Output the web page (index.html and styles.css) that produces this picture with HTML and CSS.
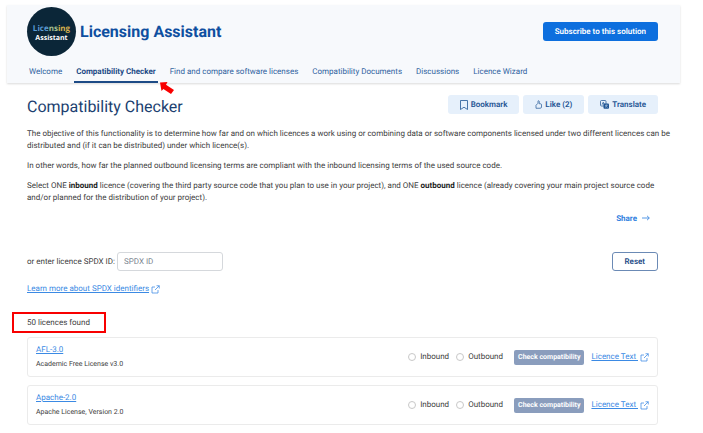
FILE: index.html
```html
<!DOCTYPE html>
<html lang="en">
<head>
    <meta charset="UTF-8">
    <meta name="viewport" content="width=device-width, initial-scale=1.0">
    <title>Compatibility Checker</title>
    <link rel="stylesheet" href="styles.css">
</head>
<body>
    <!-- Shared icon -->
    <svg class="sprite" aria-hidden="true">
        <symbol id="external" viewBox="0 0 18 18">
            <path d="M8 4H2v12h12v-6M11 1.500h5.500V7M16.500 1.500 8 10" fill="none" stroke="currentColor" stroke-width="1.500"/>
        </symbol>
    </svg>

    <header class="header">
        <div class="brand-row">
            <div class="logo">
                <span><span class="logo-blue">Lice</span><span class="logo-green">ns</span><span class="logo-gold">ing</span></span>
                <span class="logo-small">Assistant</span>
            </div>
            <div class="brand">Licensing Assistant</div>
            <button class="btn btn-primary">Subscribe to this solution</button>
        </div>
        <nav class="nav">
            <a href="#">Welcome</a>
            <a href="#" class="active">Compatibility Checker
                <svg class="pointer" viewBox="0 0 14 12" aria-hidden="true"><path d="M0 .5 7.500 0 6 2.700l8 5.300-3 4L3.400 6.900 1.500 9z" fill="#f80000"/></svg>
            </a>
            <a href="#">Find and compare software licenses</a>
            <a href="#">Compatibility Documents</a>
            <a href="#">Discussions</a>
            <a href="#">Licence Wizard</a>
        </nav>
    </header>

    <main class="content">
        <div class="title-row">
            <h1>Compatibility Checker</h1>
            <div class="actions">
                <button class="btn btn-light">
                    <svg class="icon-bookmark" viewBox="0 0 8 10" aria-hidden="true"><path d="M.5.5h7v9L4 7.200.5 9.500z" fill="none" stroke="currentColor" stroke-width=".8"/></svg>
                    Bookmark
                </button>
                <button class="btn btn-light">
                    <svg class="icon-like" viewBox="0 0 14 18" aria-hidden="true"><path d="M2 16.500V10.500L6 6.500V2.500c0-1.500 2.500-1.500 2.500.5v4.500h2.500c1 0 2 .8 2 2v4.500c0 1.500-1 2.500-2.500 2.500z" fill="none" stroke="currentColor" stroke-width="1.400"/></svg>
                    Like (2)
                </button>
                <button class="btn btn-light">
                    <svg class="icon-translate" viewBox="0 0 18 18" aria-hidden="true">
                        <rect x="1" y="1" width="11" height="11" rx="2" fill="none" stroke="currentColor" stroke-width="1.500"/>
                        <path d="M4 9.500 6.500 4 9 9.500M5 7.500h3" fill="none" stroke="currentColor" stroke-width="1.200"/>
                        <rect x="7" y="7" width="11" height="10.500" rx="2" fill="currentColor"/>
                        <path d="M10 10.500h6M13 9v1.500c0 2-1 3.500-3 4.500M11 11c.8 2 2.500 3.500 4.500 4" fill="none" stroke="#e6f0fb" stroke-width=".8"/>
                    </svg>
                    Translate
                </button>
            </div>
        </div>

        <div class="intro">
            <p>The objective of this functionality is to determine how far and on which licences a work using or combining data or software components licensed under two different licences can be distributed and (if it can be distributed) under which licence(s).</p>
            <p>In other words, how far the planned outbound licensing terms are compliant with the inbound licensing terms of the used source code.</p>
            <p>Select ONE <strong>inbound</strong> licence (covering the third party source code that you plan to use in your project), and ONE <strong>outbound</strong> licence (already covering your main project source code and/or planned for the distribution of your project).</p>
        </div>

        <div class="share">
            <a href="#">Share
                <svg class="icon-arrow" viewBox="0 0 8 6" aria-hidden="true"><path d="M0 3h7.200M5 .8 7.300 3 5 5.200" fill="none" stroke="currentColor" stroke-width=".8"/></svg>
            </a>
        </div>

        <div class="filter">
            <label for="spdx">or enter licence SPDX ID:</label>
            <input type="text" id="spdx" placeholder="SPDX ID">
            <button class="btn btn-outline">Reset</button>
        </div>

        <a href="#" class="link learn"><span>Learn more about SPDX identifiers</span><svg class="icon-external" aria-hidden="true"><use href="#external"/></svg></a>

        <div class="found">50 licences found</div>

        <div class="licence">
            <div class="licence-name">
                <a href="#">AFL-3.0</a>
                <div class="full-name">Academic Free License v3.0</div>
            </div>
            <label class="option"><input type="radio" name="inbound" value="AFL-3.0">Inbound</label>
            <label class="option"><input type="radio" name="outbound" value="AFL-3.0">Outbound</label>
            <button class="btn-check">Check compatibility</button>
            <a href="#" class="link"><span>Licence Text&nbsp;</span><svg class="icon-external" aria-hidden="true"><use href="#external"/></svg></a>
        </div>

        <div class="licence">
            <div class="licence-name">
                <a href="#">Apache-2.0</a>
                <div class="full-name">Apache License, Version 2.0</div>
            </div>
            <label class="option"><input type="radio" name="inbound" value="Apache-2.0">Inbound</label>
            <label class="option"><input type="radio" name="outbound" value="Apache-2.0">Outbound</label>
            <button class="btn-check">Check compatibility</button>
            <a href="#" class="link"><span>Licence Text&nbsp;</span><svg class="icon-external" aria-hidden="true"><use href="#external"/></svg></a>
        </div>
    </main>
</body>
</html>
```
FILE: styles.css
```css
* {
    box-sizing: border-box;
}
body {
    font-family: Roboto, sans-serif;
    font-size: 8px;
    line-height: 12px;
    text-rendering: geometricPrecision;
    color: #404040;
    background: white;
    margin: 0;
    padding: 5px 23px 0 7px;
}
button, input {
    font-family: inherit;
    font-size: inherit;
    line-height: inherit;
    text-rendering: inherit;
    margin: 0;
}
a {
    color: #3b8ae4;
}
.sprite {
    display: none;
}

/* Header */
.header {
    background: #f7f9fc;
    padding: 2px 22px 0 20px;
    box-shadow: 0 1px 2px rgba(0, 0, 0, 0.15);
}
.brand-row {
    display: flex;
    align-items: center;
    gap: 4px;
}
.logo {
    width: 49px;
    height: 49px;
    padding-top: 4px;
    border-radius: 50%;
    background: #0b2638;
    color: white;
    display: flex;
    flex-direction: column;
    align-items: center;
    justify-content: center;
    font-family: "Open Sans", sans-serif;
    font-size: 8px;
    font-weight: bold;
    line-height: 10px;
}
.logo-small {
    font-size: 7px;
}
.logo-blue {
    color: #5b9bd5;
}
.logo-green {
    color: #a3bf8f;
}
.logo-gold {
    color: #d9b24c;
}
.brand {
    flex: 1;
    font-size: 16px;
    line-height: 20px;
    font-weight: bold;
    color: #0e4fa0;
}
.btn {
    display: flex;
    align-items: center;
    justify-content: center;
    gap: 3px;
    height: 19px;
    padding: 0 12px;
    border: 0;
    border-radius: 3px;
    font-weight: 600;
    cursor: pointer;
}
.btn-primary {
    background: #0d6fde;
    color: white;
}
.nav {
    display: flex;
    gap: 14px;
    padding: 8px 2px 0;
}
.nav a {
    position: relative;
    padding: 2px 0 3px;
    color: #2f629f;
    text-decoration: none;
    border-bottom: 2px solid transparent;
}
.nav .active {
    margin: 0 -2px;
    padding: 2px 2px 3px;
    font-weight: bold;
    color: #1d4b86;
    border-color: #1d4b86;
}
.pointer {
    position: absolute;
    left: 100%;
    top: 100%;
    width: 14px;
    height: 12px;
    margin: 1px 0 0 2px;
}

/* Content */
.content {
    padding: 12px 22px 0 20px;
}
.title-row {
    display: flex;
    justify-content: space-between;
    align-items: flex-start;
}
h1 {
    margin: 2px 0 0;
    font-size: 16px;
    line-height: 20px;
    font-weight: normal;
    color: #1c3f70;
}
.actions {
    display: flex;
    gap: 4px;
}
.btn-light {
    background: #e6f0fb;
    color: #1f5594;
}
.icon-bookmark {
    width: 8px;
    height: 10px;
}
.icon-like {
    width: 7px;
    height: 9px;
}
.icon-translate {
    width: 9px;
    height: 9px;
}
.intro {
    margin: 11px -20px 0 0;
}
.intro p {
    margin: 0 0 8px;
}
.intro strong {
    color: #222;
}
.share {
    text-align: right;
    padding: 1px 8px 0 0;
}
.share a {
    font-weight: bold;
    text-decoration: none;
    color: #2f80e0;
}
.icon-arrow {
    width: 8px;
    height: 6px;
    margin-left: 3px;
}
.filter {
    display: flex;
    align-items: center;
    gap: 2px;
    margin-top: 27px;
}
.filter input {
    width: 106px;
    height: 19px;
    padding: 0 6px;
    border: 1px solid #d5d8dc;
    border-radius: 3px;
}
.filter input::placeholder {
    color: #7c8590;
}
.btn-outline {
    margin-left: auto;
    background: white;
    color: #1d4b86;
    border: 1px solid #6b8ab5;
}
.link {
    display: inline-flex;
    align-items: center;
    gap: 2px;
    text-decoration: none;
}
.link span {
    text-decoration: underline;
}
.icon-external {
    width: 9px;
    height: 9px;
}
.learn {
    margin-top: 12px;
}
.found {
    width: fit-content;
    margin: 17px 0 4px -15px;
    padding: 3px 14px 2px 13px;
    border: 2px solid #f80000;
}

/* Licence list */
.licence {
    display: flex;
    align-items: center;
    padding: 6px 8px;
    margin-bottom: 8px;
    border: 1px solid #ebebeb;
    border-radius: 3px;
}
.licence-name {
    flex: 1;
}
.full-name {
    font-size: 7px;
    margin-top: 2px;
}
.option {
    display: flex;
    align-items: center;
    gap: 4px;
    margin-right: 7px;
}
.option input {
    appearance: none;
    width: 8px;
    height: 8px;
    border: 1px solid #c8c8c8;
    border-radius: 50%;
}
.btn-check {
    height: 15px;
    margin: 0 7px 0 4px;
    padding: 0 4px;
    border: 0;
    border-radius: 2px;
    background: #8a9dbd;
    color: white;
    font-size: 7px;
    font-weight: bold;
}
```
